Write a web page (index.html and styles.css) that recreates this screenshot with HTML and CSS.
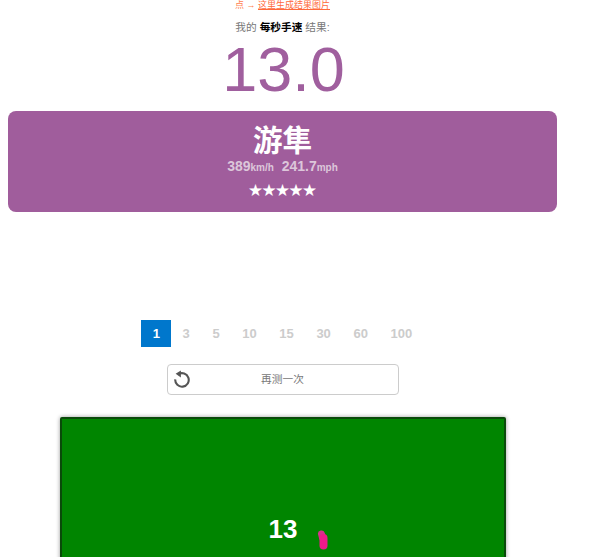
FILE: index.html
```html
<!DOCTYPE html>
<html>
<head>
    <title>每秒手速</title>
    <link rel="stylesheet" href="styles.css">
</head>
<body>
    <div class="container">
        <p class="share">点 → <a href="#">这里生成结果图片</a></p>
        <p class="intro">我的 <b>每秒手速</b> 结果:</p>
        <div class="score">13.0</div>
        <div class="result">
            <h1>游隼</h1>
            <p class="speed">389<small>km/h</small>&nbsp; 241.7<small>mph</small></p>
            <p class="stars">★★★★★</p>
        </div>
        <ul class="tabs">
            <li class="active">1</li>
            <li>3</li>
            <li>5</li>
            <li>10</li>
            <li>15</li>
            <li>30</li>
            <li>60</li>
            <li>100</li>
        </ul>
        <button class="retry">
            <svg class="retry-icon" viewBox="0 0 24 24" width="18" height="18">
                <path d="M7.2 5.6 A9 9 0 1 1 3 12.5" fill="none" stroke="#555" stroke-width="2.8"/>
                <path d="M10.5 0.5 L10.5 10 L3.5 5 Z" fill="#555"/>
            </svg>
            <span>再测一次</span>
        </button>
        <div class="pad">
            <span class="count">13</span>
            <svg class="stroke" viewBox="0 0 12 20" width="12" height="20">
                <path d="M4.5 4 L5.5 8" stroke="#d82f8c" stroke-width="7" stroke-linecap="round" fill="none"/>
                <path d="M6.5 8 L6.5 15.5" stroke="#ee1a8a" stroke-width="8" stroke-linecap="round" fill="none"/>
            </svg>
        </div>
    </div>
</body>
</html>
```

FILE: styles.css
```css
html, body {
    height: 100%;
    overflow: hidden;
}

body {
    font-family: "Liberation Sans", "Noto Sans CJK SC", sans-serif;
    background-color: #ffffff;
    color: #777777;
    margin: 0 0 0 8px;
}

.container {
    width: 549px;
    text-align: center;
}

.share {
    font-size: 9px;
    line-height: 10px;
    height: 9px;
    margin: 0;
    color: #ff7f50;
}

.share a {
    color: #ff6a3c;
}

.intro {
    font-size: 10.7px;
    line-height: 16px;
    margin: 10px 0 0;
}

.intro b {
    color: #000000;
}

.score {
    font-size: 63px;
    line-height: 68px;
    text-indent: 2px;
    color: #a05f9e;
}

.result {
    height: 101px;
    box-sizing: border-box;
    margin-top: 8px;
    padding-top: 13px;
    background-color: #a05d9c;
    border-radius: 8px;
    color: #ffffff;
}

.result h1 {
    font-size: 29.5px;
    line-height: 34px;
    margin: 0;
}

.speed {
    font-size: 14px;
    line-height: 16px;
    font-weight: bold;
    margin: 0;
    color: #dcc6da;
}

.speed small {
    font-size: 10px;
}

.stars {
    font-size: 13.5px;
    line-height: 20px;
    margin: 5px 0 0;
}

.tabs {
    display: flex;
    justify-content: center;
    list-style: none;
    margin: 108px 0 0;
    padding: 0;
    font-size: 13px;
    font-weight: bold;
    color: #cccccc;
}

.tabs li {
    height: 27px;
    line-height: 27px;
    padding: 0 11.3px;
}

.tabs .active {
    background-color: #0077cc;
    color: #ffffff;
}

.retry {
    display: flex;
    align-items: center;
    width: 232px;
    height: 31px;
    margin: 17px auto 0;
    padding: 0 5px;
    background-color: #ffffff;
    border: 1px solid #cccccc;
    border-radius: 4px;
    font-family: inherit;
    font-size: 10.7px;
    color: #777777;
}

.retry span {
    flex: 1;
    padding-right: 18px;
    padding-bottom: 2px;
}

.retry-icon {
    margin-bottom: 2px;
}

.pad {
    position: relative;
    box-sizing: border-box;
    width: 446px;
    height: 200px;
    margin: 22px 0 0 52px;
    padding-top: 95px;
    background-color: #008500;
    border: 2px solid #0a4a0a;
    border-radius: 2px;
    box-shadow: 0 0 4px rgba(0, 0, 0, 0.4);
}

.count {
    font-size: 26px;
    line-height: 30px;
    font-weight: bold;
    color: #ffffff;
}

.stroke {
    position: absolute;
    left: 255px;
    top: 111px;
}
```
